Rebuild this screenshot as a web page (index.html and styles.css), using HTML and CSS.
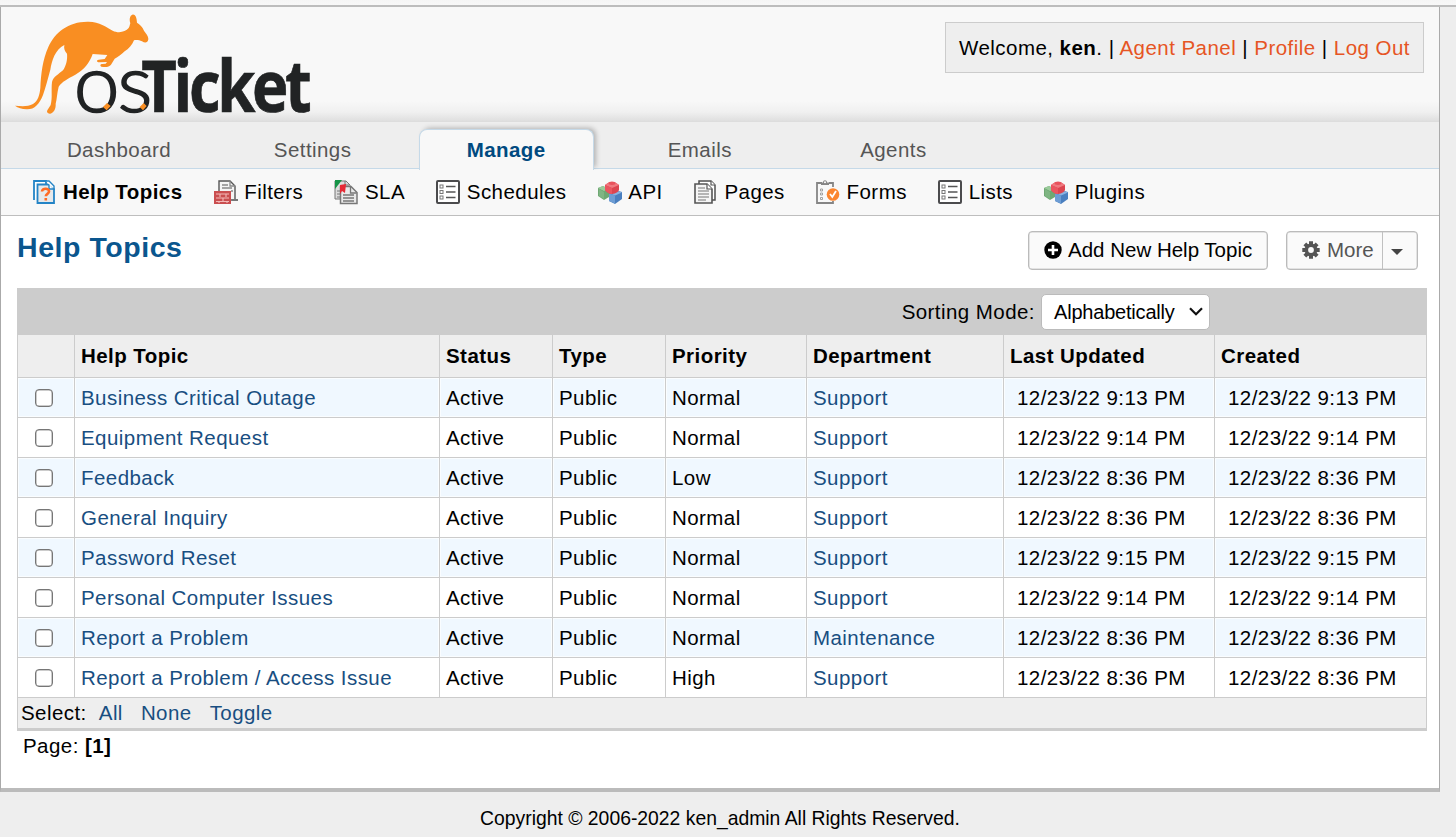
FILE: index.html
```html
<!DOCTYPE html>
<html lang="en">
<head>
<meta charset="utf-8">
<title>osTicket :: Help Topics</title>
<link rel="stylesheet" href="styles.css">
</head>
<body>
<svg class="defs" width="0" height="0" aria-hidden="true">
  <symbol id="i-list" viewBox="0 0 24 24">
    <rect x="1" y="1" width="22" height="22" rx="1" fill="#fff" stroke="#4b4b4d" stroke-width="2"/>
    <g fill="none" stroke="#777" stroke-width="1"><rect x="4" y="5" width="3" height="3"/><rect x="4" y="10.5" width="3" height="3"/><rect x="4" y="16" width="3" height="3"/></g>
    <path d="M10 6.5h9.500M10 12h9.500M10 17.500h9.500" stroke="#555" stroke-width="1.600"/>
  </symbol>
  <symbol id="i-cubes" viewBox="0 0 24 24">
    <path d="M0 8l5-2 6 3v8l-5 3-6-4z" fill="#6fa873"/><path d="M0 8l5-2 6 3-5 2z" fill="#9bcb9b"/><path d="M1 9l5 3v7l-5-3z" fill="#7fb583"/>
    <path d="M11 13l6-3 7 2v7l-7 5-6-3z" fill="#4a7fbf"/><path d="M11 13l6 2.500 7-3-6-2z" fill="#8ab3e0"/><path d="M11 13.500l6 2v8l-6-2.500z" fill="#6d9dd4"/>
    <path d="M7 5q3-3 7-3t7 3v5q-1 3-7 4-4 0-7-4z" fill="#dc4550"/><path d="M7 5q3-3 7-3t7 3l-7 3z" fill="#f07a80"/><ellipse cx="14" cy="3.300" rx="3.500" ry="1.700" fill="#e8535d"/><path d="M7 5l7 3v6q-4 0-7-4z" fill="#ea5660"/>
  </symbol>
</svg>
<div class="container">
  <header class="header">
    <svg class="logo" viewBox="45 40 894 309" role="img" aria-label="osTicket">
      <path fill="#f98e22" d="M45 318C66 320 84 321 99 313C114 303 119 286 121 264C123 222 128 180 145 142C164 99 205 66 262 66C300 65 316 82 338 93C354 101 376 98 386 85C390 79 389 75 391 71C387 58 390 47 397 45C405 43 410 51 411 69C420 74 427 81 432 93C437 101 446 109 445 119C443 130 435 131 426 125C418 121 408 120 402 122C397 135 386 148 374 155C364 164 354 173 344 177L333 195C327 203 316 202 304 201C299 198 301 193 307 193L317 192L321 187L298 188C289 187 289 181 296 180L314 178L322 166L278 163C269 190 251 211 226 225C204 236 185 247 176 261C171 280 171 297 167 312C168 328 161 339 151 342C143 343 139 338 142 332L152 316C158 295 153 271 156 247C160 231 177 223 189 212C198 199 203 180 201 162C194 155 191 147 193 136C165 151 156 181 151 210C143 239 137 263 129 286C118 314 103 330 80 329C65 328 54 325 45 318Z"/>
      <text class="logo-thin" x="221" y="336" textLength="230" lengthAdjust="spacingAndGlyphs">os</text>
      <text class="logo-bold" x="424" y="338" textLength="501" lengthAdjust="spacingAndGlyphs">Ticket</text>
      <path fill="#f98e22" d="M309 322l12-12 11 9-12 13zM419 322l12-12 9 9-11 13z"/>
    </svg>
    <p class="welcome">Welcome, <b>ken</b>. | <a>Agent Panel</a> | <a>Profile</a> | <a>Log Out</a></p>
  </header>
  <nav class="tabs">
    <a class="tab">Dashboard</a><a class="tab">Settings</a><a class="tab active">Manage</a><a class="tab">Emails</a><a class="tab">Agents</a>
  </nav>
  <nav class="subnav">
    <a class="sub current"><svg class="icon" viewBox="0 0 24 24"><path d="M2 20V1h12v3" fill="#fff" stroke="#2484c6" stroke-width="1.800"/><path d="M5.500 4.500h12l4.500 4.500v14h-16.500z" fill="#e6e9eb" stroke="#2484c6" stroke-width="1.800"/><path d="M14 1h3l5 5v4M17 4.500V9h5" fill="#fff" stroke="#2484c6" stroke-width="1.400"/><path d="M10 11.500c0-4 7.500-3.500 7 .2-.2 2.300-3.200 2-3.200 4.600M13.800 18v2.500" fill="none" stroke="#ff6b25" stroke-width="2.600"/></svg>Help Topics</a>
    <a class="sub"><svg class="icon" viewBox="0 0 24 24"><path d="M5 12V1h11l5 5v14h-5" fill="#f4f4f4" stroke="#555" stroke-width="1.400"/><path d="M16 1v5h5M8 5h6M8 8h10M17 11h2" fill="none" stroke="#888" stroke-width="1.300"/><path d="M18 20h6" stroke="#777" stroke-width="2"/><rect y="11" width="17" height="13" fill="#ca4e50"/><path d="M2 14h13M2 18h13M2 21.500h13M6 14v3M12 14v3M9 18v3M5 21v2M13 21v2" stroke="#f3b9b7" stroke-width="1.100" fill="none"/></svg>Filters</a>
    <a class="sub"><svg class="icon" viewBox="0 0 24 24"><path d="M1 1h11l4 4v14H1z" fill="#ddd" stroke="#777"/><path d="M1 0h7L1 9z" fill="#159447"/><path d="M3 11h3M3 14h3M3 17h3M11 1v4h4" stroke="#777" fill="none"/><path d="M6.500 6.500H17l6 6v11H6.500z" fill="#e9e9e9" stroke="#777" stroke-width="1.500"/><path d="M16.500 7v6h6M9 15h11M9 18h11M9 21h11" fill="none" stroke="#777" stroke-width="1.300"/><path d="M6 5l6-1-1 9-3-2-2 3z" fill="#e52a35"/></svg>SLA</a>
    <a class="sub"><svg class="icon"><use href="#i-list"/></svg>Schedules</a>
    <a class="sub"><svg class="icon"><use href="#i-cubes"/></svg>API</a>
    <a class="sub"><svg class="icon" viewBox="0 0 24 24"><path d="M5 4V1h12l4 4v15h-3" fill="#fff" stroke="#4f4f4f" stroke-width="1.500"/><path d="M1 4h12l5 5v14H1z" fill="#f5f5f5" stroke="#555" stroke-width="1.600"/><path d="M13 4v5h5M17 1v4h4" fill="#fff" stroke="#555" stroke-width="1.200"/><path d="M4 8h7M4 11h11M4 14h11M4 17h11M4 20h8" stroke="#777" stroke-width="1.200"/></svg>Pages</a>
    <a class="sub"><svg class="icon" viewBox="0 0 24 24"><path d="M6 3H1v20h16v-2M13 3h4v4" fill="none" stroke="#858585" stroke-width="1.800"/><path d="M5 2.500h2C7-.5 11-.5 11 2.500h2v2.500H5z" fill="#858585"/><circle cx="9" cy="2.300" r="1" fill="#fff"/><path d="M4.500 9h2v2h-2zM4.500 13h2v2h-2zM4.500 17.500h2v2h-2z" fill="none" stroke="#999" stroke-width=".9"/><circle cx="17" cy="14.500" r="6.300" fill="#fb852e"/><path d="M14 14l2.300 3 3.700-6" fill="none" stroke="#fff" stroke-width="1.800"/></svg>Forms</a>
    <a class="sub"><svg class="icon"><use href="#i-list"/></svg>Lists</a>
    <a class="sub"><svg class="icon"><use href="#i-cubes"/></svg>Plugins</a>
  </nav>
  <main class="content">
    <div class="titlebar">
      <h2>Help Topics</h2>
      <button class="button add"><svg class="bicon" viewBox="0 0 18 18"><circle cx="9" cy="9" r="8.700" fill="#000"/><path d="M9 4v10M4 9h10" stroke="#fff" stroke-width="2.600"/></svg>Add New Help Topic</button>
      <button class="button more"><span class="more-label"><svg class="bicon" viewBox="0 0 18 18"><g stroke="#555" stroke-width="4"><path d="M9 .3v17.400M.3 9h17.400M2.850 2.850l12.300 12.300M15.150 2.850l-12.300 12.300"/></g><circle cx="9" cy="9" r="6.500" fill="#555"/><circle cx="9" cy="9" r="2.900" fill="#fafafa"/></svg>More</span><span class="caret"><i></i></span></button>
    </div>
    <div class="sortbar"><span>Sorting Mode:</span><span class="select">Alphabetically<svg viewBox="0 0 14 9"><path d="M1 1.200l6 6 6-6" fill="none" stroke="#111" stroke-width="2.200"/></svg></span></div>
    <table class="list">
      <colgroup><col class="c1"><col class="c2"><col class="c3"><col class="c4"><col class="c5"><col class="c6"><col class="c7"><col class="c8"></colgroup>
      <thead><tr><th></th><th>Help Topic</th><th>Status</th><th>Type</th><th>Priority</th><th>Department</th><th>Last Updated</th><th>Created</th></tr></thead>
      <tbody>
        <tr><td><i class="check"></i></td><td><a>Business Critical Outage</a></td><td>Active</td><td>Public</td><td>Normal</td><td><a>Support</a></td><td class="date">12/23/22 9:13 PM</td><td class="date">12/23/22 9:13 PM</td></tr>
        <tr><td><i class="check"></i></td><td><a>Equipment Request</a></td><td>Active</td><td>Public</td><td>Normal</td><td><a>Support</a></td><td class="date">12/23/22 9:14 PM</td><td class="date">12/23/22 9:14 PM</td></tr>
        <tr><td><i class="check"></i></td><td><a>Feedback</a></td><td>Active</td><td>Public</td><td>Low</td><td><a>Support</a></td><td class="date">12/23/22 8:36 PM</td><td class="date">12/23/22 8:36 PM</td></tr>
        <tr><td><i class="check"></i></td><td><a>General Inquiry</a></td><td>Active</td><td>Public</td><td>Normal</td><td><a>Support</a></td><td class="date">12/23/22 8:36 PM</td><td class="date">12/23/22 8:36 PM</td></tr>
        <tr><td><i class="check"></i></td><td><a>Password Reset</a></td><td>Active</td><td>Public</td><td>Normal</td><td><a>Support</a></td><td class="date">12/23/22 9:15 PM</td><td class="date">12/23/22 9:15 PM</td></tr>
        <tr><td><i class="check"></i></td><td><a>Personal Computer Issues</a></td><td>Active</td><td>Public</td><td>Normal</td><td><a>Support</a></td><td class="date">12/23/22 9:14 PM</td><td class="date">12/23/22 9:14 PM</td></tr>
        <tr><td><i class="check"></i></td><td><a>Report a Problem</a></td><td>Active</td><td>Public</td><td>Normal</td><td><a>Maintenance</a></td><td class="date">12/23/22 8:36 PM</td><td class="date">12/23/22 8:36 PM</td></tr>
        <tr><td><i class="check"></i></td><td><a>Report a Problem / Access Issue</a></td><td>Active</td><td>Public</td><td>High</td><td><a>Support</a></td><td class="date">12/23/22 8:36 PM</td><td class="date">12/23/22 8:36 PM</td></tr>
      </tbody>
    </table>
    <div class="selectbar"><span>Select:</span><a>All</a><a>None</a><a>Toggle</a></div>
    <p class="pager">Page: <b>[1]</b></p>
  </main>
</div>
<footer class="footer">Copyright © 2006-2022 ken_admin All Rights Reserved.</footer>
</body>
</html>
```

FILE: styles.css
```css
* { box-sizing: border-box; }
body {
  margin: 0;
  height: 837px;
  overflow: hidden;
  padding-top: 5px;
  background: #eee linear-gradient(#f5f5f5, #f8f8f8 5px, #eee 5px) no-repeat;
  font: 20.5px/24px "Liberation Sans", Arial, sans-serif;
  letter-spacing: .44px;
  color: #000;
}
.defs { position: absolute; }
body::before { content: ""; display: block; height: 2px; background: #bdbdbd; }
.container {
  width: 1440px;
  height: 785px;
  border-left: 1px solid #aaa;
  border-right: 1px solid #aaa;
  border-bottom: 4px solid #bbb;
  background: #fff;
}
.header {
  height: 114px;
  display: flex;
  justify-content: space-between;
  align-items: flex-start;
  padding: 6px 15px 0 14px;
  background: linear-gradient(#f8f8f8 94px, #f0f0f0 105px, #dfdfdf 114px);
}
.logo { width: 298px; height: 103px; display: block; overflow: visible; }
.logo text { fill: #212324; stroke: #212324; }
.logo-thin { font-family: Lato, sans-serif; font-weight: 300; font-size: 240px; letter-spacing: -6px; stroke-width: 5px; }
.logo-bold { font-family: "Open Sans", sans-serif; font-weight: 700; font-size: 216px; letter-spacing: -12px; stroke-width: 2px; }
.welcome {
  margin: 9px 0 0;
  width: 479px;
  height: 51px;
  padding: 0 0 0 13px;
  line-height: 50px;
  letter-spacing: .46px;
  white-space: nowrap;
  background: #eee;
  border: 1px solid #ccc;
}
.welcome a { color: #e65524; }
.tabs {
  height: 48px;
  display: flex;
  gap: 18.6px;
  padding: 7px 0 0 31px;
  background: #eee;
  border-top: 1px solid #ddd;
  border-bottom: 1px solid #c5d9e8;
}
.tab { width: 175px; height: 39px; padding-right: 1px; line-height: 42px; text-align: center; color: #555; }
.tab.active {
  height: 41px;
  line-height: 40px;
  font-weight: bold;
  color: #004a80;
  background: #f8f8f8;
  border: 1px solid #c5d9e8;
  border-bottom: 0;
  border-radius: 8px 8px 0 0;
  box-shadow: 3px -2px 5px -1px rgba(0, 0, 0, .25);
  clip-path: inset(-8px -10px 0 -4px);
}
.subnav {
  height: 47px;
  display: flex;
  align-items: center;
  gap: 31.1px;
  padding: 0 0 1px 31.3px;
  background: #f8f8f8;
  border-bottom: 1px solid #bebebe;
}
.sub { display: flex; align-items: center; gap: 6.700px; white-space: nowrap; }
.current { font-weight: bold; }
.icon { width: 24px; height: 24px; overflow: visible; }
.content { padding: 15px 12px 0 16px; }
.titlebar { display: flex; height: 57px; padding-right: 9px; }
h2 { margin: 0 auto 0 0; font-size: 28.5px; line-height: 33px; letter-spacing: .55px; color: #0a568e; }
.button {
  height: 39px;
  display: flex;
  align-items: center;
  padding: 0;
  font: 20.5px/24px "Liberation Sans", Arial, sans-serif;
  letter-spacing: 0;
  background: #fafafa;
  border: 1px solid #bbb;
  box-shadow: inset 0 0 0 .5px #ccc;
  border-radius: 4px;
}
.add { width: 240px; padding: 0 0 2px 15px; color: #000; }
.more { width: 132px; margin-left: 18px; color: #555; }
.bicon { width: 18px; height: 18px; margin-right: 6px; flex: none; }
.more-label { width: 95px; padding: 0 0 2px 15px; display: flex; align-items: center; }
.more-label .bicon { margin-right: 7px; }
.caret { height: 100%; flex: 1; border-left: 1px solid #c0c0c0; display: flex; align-items: center; padding-left: 8px; }
.caret i { border: 6px solid transparent; border-top-color: #444; border-bottom: 0; margin-top: 2px; }
.sortbar {
  width: 1410px;
  height: 47px;
  display: flex;
  align-items: center;
  justify-content: flex-end;
  gap: 6px;
  padding-right: 217px;
  background: #ccc;
}
.select {
  width: 169px;
  height: 36px;
  display: flex;
  align-items: center;
  justify-content: space-between;
  padding: 0 6px 0 12px;
  background: #fff;
  border: 1px solid #bbb;
  border-radius: 5px;
  font-size: 20px;
  letter-spacing: -.2px;
}
.select svg { width: 14px; height: 9px; }
.list { width: 1410px; table-layout: fixed; border-collapse: separate; border-spacing: 0; }
.c1 { width: 57px; } .c2 { width: 365px; } .c3 { width: 113px; } .c4 { width: 113px; }
.c5 { width: 141px; } .c6 { width: 197px; } .c7 { width: 211px; } .c8 { width: 213px; }
.list th, .list td {
  height: 40px;
  padding: 0 0 0 6px;
  text-align: left;
  white-space: nowrap;
  border-left: 1px solid #ccc;
  border-bottom: 1px solid #ccc;
}
.list th { height: 43px; background: #eee; }
.list th:last-child, .list td:last-child { border-right: 1px solid #ccc; }
.list tbody tr:nth-child(odd) td { background: #f0f8ff; box-shadow: inset 0 0 0 1px #fafdff; }
.list .date { padding-left: 13px; }
.list a, .selectbar a { color: #184e81; }
.check { display: block; width: 18px; height: 18px; margin-left: 11px; border: 1px solid #767676; box-shadow: inset 0 0 0 .5px #999; border-radius: 4px; background: #fff; }
.selectbar {
  width: 1410px;
  height: 33px;
  display: flex;
  padding: 3px 0 0 3px;
  background: #eee;
  border: 1px solid #ccc;
  border-top: 0;
  border-bottom: 3px solid #ccc;
}
.selectbar span { margin-right: 12px; }
.selectbar a { margin-right: 18px; }
.pager { margin: 3px 0 0 6px; }
.footer { width: 1440px; padding-top: 14px; text-align: center; font-size: 19.35px; letter-spacing: 0; }
```
